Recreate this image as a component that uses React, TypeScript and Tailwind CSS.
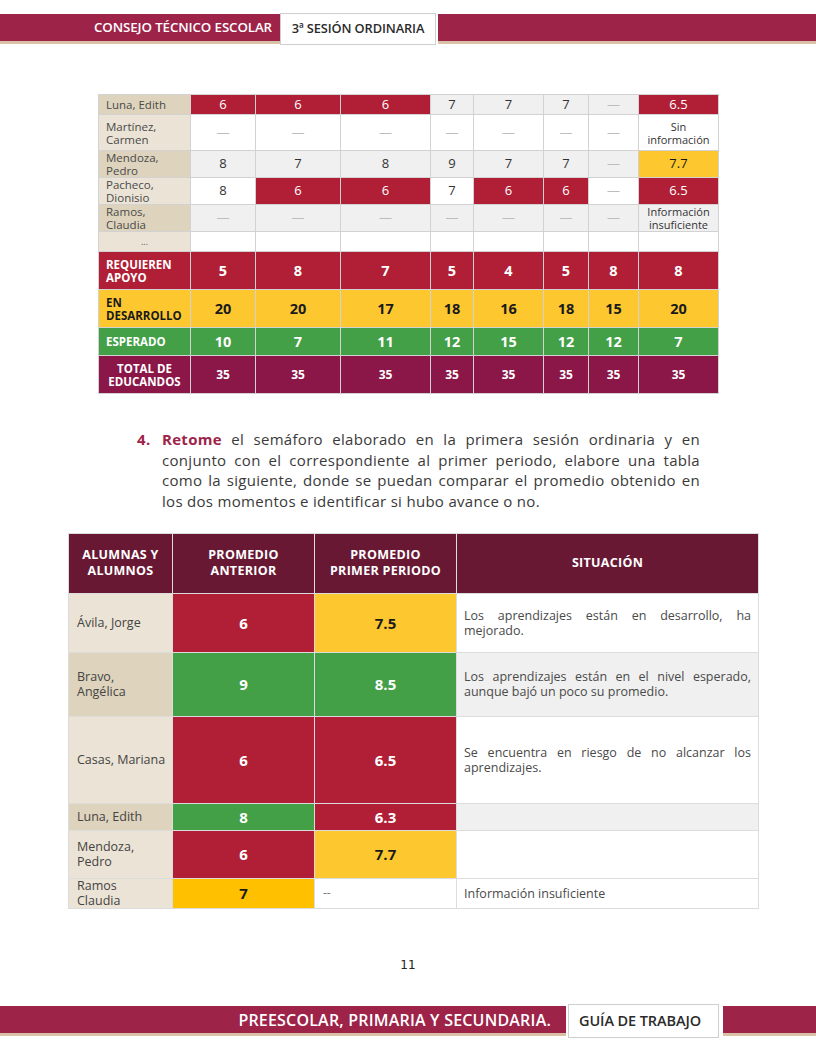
import React from 'react';

type Cell = { v: string; bg?: string; tone?: string };

const RED = 'bg-[#b01f36] text-white';
const YEL = 'bg-[#fdc82f] text-[#1a1a1a]';
const ORG = 'bg-[#ffc000] text-[#1a1a1a]';
const GRN = 'bg-[#43a047] text-white';
const TOT = 'bg-[#8a1748] text-white';
const TAN_DARK = 'bg-[#ded3bd]';
const TAN_LIGHT = 'bg-[#ebe3d5]';

const dash = '—';

const topCols = 'grid-cols-[91px_64px_84px_89px_42px_69px_44px_49px_79px]';

const studentRows: { name: string; h: string; tan: string; base: string; cells: Cell[] }[] = [
  {
    name: 'Luna, Edith', h: 'h-[19px]', tan: TAN_DARK, base: 'bg-[#f0f0f0]',
    cells: [
      { v: '6', bg: RED }, { v: '6', bg: RED }, { v: '6', bg: RED },
      { v: '7' }, { v: '7' }, { v: '7' }, { v: dash }, { v: '6.5', bg: RED },
    ],
  },
  {
    name: 'Martínez, Carmen', h: 'h-[35px]', tan: TAN_LIGHT, base: 'bg-white',
    cells: [
      { v: dash }, { v: dash }, { v: dash }, { v: dash }, { v: dash }, { v: dash }, { v: dash },
      { v: 'Sin información', tone: 'small' },
    ],
  },
  {
    name: 'Mendoza, Pedro', h: 'h-[26px]', tan: TAN_DARK, base: 'bg-[#f0f0f0]',
    cells: [
      { v: '8' }, { v: '7' }, { v: '8' }, { v: '9' }, { v: '7' }, { v: '7' }, { v: dash },
      { v: '7.7', bg: YEL },
    ],
  },
  {
    name: 'Pacheco, Dionisio', h: 'h-[26px]', tan: TAN_LIGHT, base: 'bg-white',
    cells: [
      { v: '8' }, { v: '6', bg: RED }, { v: '6', bg: RED }, { v: '7' },
      { v: '6', bg: RED }, { v: '6', bg: RED }, { v: dash }, { v: '6.5', bg: RED },
    ],
  },
  {
    name: 'Ramos, Claudia', h: 'h-[26px]', tan: TAN_DARK, base: 'bg-[#f0f0f0]',
    cells: [
      { v: dash }, { v: dash }, { v: dash }, { v: dash }, { v: dash }, { v: dash }, { v: dash },
      { v: 'Información insuficiente', tone: 'small' },
    ],
  },
];

const summaryRows = [
  { label: 'REQUIEREN APOYO', h: 'h-[37px]', cls: RED, vals: ['5', '8', '7', '5', '4', '5', '8', '8'], size: 'text-[14.5px]' },
  { label: 'EN DESARROLLO', h: 'h-[37px]', cls: YEL, vals: ['20', '20', '17', '18', '16', '18', '15', '20'], size: 'text-[14.5px]' },
  { label: 'ESPERADO', h: 'h-[27px]', cls: GRN, vals: ['10', '7', '11', '12', '15', '12', '12', '7'], size: 'text-[14.5px]' },
  { label: 'TOTAL DE EDUCANDOS', h: 'h-[37px]', cls: TOT, vals: ['35', '35', '35', '35', '35', '35', '35', '35'], size: 'text-[12px]' },
];

// names keep the line breaks of the printed table
const compareRows: {
  name: string; h: string; tan: string; a: Cell; b: Cell; note: string; noteBg: string;
}[] = [
  {
    name: 'Ávila, Jorge', h: 'h-[58px]', tan: TAN_LIGHT,
    a: { v: '6', bg: RED }, b: { v: '7.5', bg: YEL },
    note: 'Los aprendizajes están en desarrollo, ha mejorado.', noteBg: 'bg-white',
  },
  {
    name: 'Bravo,\nAngélica', h: 'h-[63px]', tan: TAN_DARK,
    a: { v: '9', bg: GRN }, b: { v: '8.5', bg: GRN },
    note: 'Los aprendizajes están en el nivel esperado, aunque bajó un poco su promedio.', noteBg: 'bg-[#f0f0f0]',
  },
  {
    name: 'Casas, Mariana', h: 'h-[86px]', tan: TAN_LIGHT,
    a: { v: '6', bg: RED }, b: { v: '6.5', bg: RED },
    note: 'Se encuentra en riesgo de no alcanzar los aprendizajes.', noteBg: 'bg-white',
  },
  {
    name: 'Luna, Edith', h: 'h-[26px]', tan: TAN_DARK,
    a: { v: '8', bg: GRN }, b: { v: '6.3', bg: RED },
    note: '', noteBg: 'bg-[#f0f0f0]',
  },
  {
    name: 'Mendoza,\nPedro', h: 'h-[47px]', tan: TAN_LIGHT,
    a: { v: '6', bg: RED }, b: { v: '7.7', bg: YEL },
    note: '', noteBg: 'bg-white',
  },
  {
    name: 'Ramos\nClaudia', h: 'h-[29px]', tan: TAN_LIGHT,
    a: { v: '7', bg: ORG }, b: { v: '--' },
    note: 'Información insuficiente', noteBg: 'bg-white',
  },
];

const TopTable = () => (
  <div className={`grid ${topCols} gap-px bg-[#d2d2d2] border border-[#d2d2d2] w-fit`}>
    {studentRows.map((row) => (
      <React.Fragment key={row.name}>
        <div className={`${row.h} ${row.tan} flex items-center pl-[7px] pr-[10px] text-[11.5px] leading-[13px] text-[#4a4a4a]`}>
          {row.name}
        </div>
        {row.cells.map((c, i) => (
          <div
            key={i}
            className={`${row.h} flex items-center justify-center text-center ${
              c.bg ? c.bg : `${row.base} ${c.v === dash ? 'text-[#bdbdbd]' : 'text-[#333]'}`
            } ${c.tone === 'small' ? 'text-[11px] leading-[13px] text-[#333]' : 'text-[13px]'}`}
          >
            {c.v}
          </div>
        ))}
      </React.Fragment>
    ))}

    {/* filler row */}
    <div className={`h-[19px] ${TAN_LIGHT} flex items-center justify-center text-[9px] text-[#555]`}>...</div>
    {Array.from({ length: 8 }).map((_, i) => (
      <div key={i} className="h-[19px] bg-white" />
    ))}

    {summaryRows.map((row) => (
      <React.Fragment key={row.label}>
        <div
          className={`${row.h} ${row.cls} flex items-center font-bold text-[11.5px] leading-[13px] ${
            row.label.startsWith('TOTAL') ? 'justify-center text-center px-1' : 'pl-[7px] pr-1'
          }`}
        >
          {row.label}
        </div>
        {row.vals.map((v, i) => (
          <div key={i} className={`${row.h} ${row.cls} ${row.size} font-bold flex items-center justify-center`}>
            {v}
          </div>
        ))}
      </React.Fragment>
    ))}
  </div>
);

const CompareTable = () => (
  <div className="grid grid-cols-[103px_141px_141px_301px] gap-px bg-[#dcdcdc] border border-[#dcdcdc] w-fit">
    {['ALUMNAS Y ALUMNOS', 'PROMEDIO ANTERIOR', 'PROMEDIO PRIMER PERIODO', 'SITUACIÓN'].map((h, i) => (
      <div
        key={h}
        className={`h-[59px] bg-[#691834] text-white font-bold text-[12.5px] tracking-[0.3px] leading-[16px] flex items-center justify-center text-center ${
          i === 0 ? 'px-2' : i === 1 ? 'px-7' : 'px-[14px]'
        }`}
      >
        {h}
      </div>
    ))}
    {compareRows.map((r) => (
      <React.Fragment key={r.name}>
        <div className={`${r.h} ${r.tan} flex items-center pl-[8px] pr-[2px] text-[12.5px] leading-[15px] text-[#444] whitespace-pre-line`}>
          {r.name}
        </div>
        {[r.a, r.b].map((c, i) =>
          c.bg ? (
            <div key={i} className={`${r.h} ${c.bg} flex items-center justify-center font-bold text-[15px]`}>
              {c.v}
            </div>
          ) : (
            <div key={i} className={`${r.h} bg-white flex items-center pl-[8px] text-[12px] text-[#777]`}>
              {c.v}
            </div>
          )
        )}
        <div className={`${r.h} ${r.noteBg} flex items-center px-[7px]`}>
          <p className="text-[12.5px] leading-[15px] text-[#4a4a4a] text-justify w-full">{r.note}</p>
        </div>
      </React.Fragment>
    ))}
  </div>
);

export default function App() {
  return (
    <div className="w-[816px] h-[1056px] bg-white flex flex-col font-['Open_Sans',sans-serif] overflow-hidden">
      {/* Header */}
      <div className="mt-[13px] h-[32px] flex items-center">
        <div className="w-[280px] h-[30px] flex flex-col">
          <div className="flex-1 bg-[#9e2349] flex items-center justify-end pr-[8px]">
            <span className="text-white font-semibold text-[13.3px] tracking-[-0.1px]">CONSEJO TÉCNICO ESCOLAR</span>
          </div>
          <div className="h-[3px] bg-[#d8c1a4]" />
        </div>
        <div className="w-[156px] h-[32px] bg-white border border-[#cfcfcf] flex items-center justify-center">
          <span className="text-[#2b2b2b] font-semibold text-[12.8px] tracking-[-0.1px]">3ª SESIÓN ORDINARIA</span>
        </div>
        <div className="flex-1 ml-[2px] h-[30px] flex flex-col">
          <div className="flex-1 bg-[#9e2349]" />
          <div className="h-[3px] bg-[#d8c1a4]" />
        </div>
      </div>

      <div className="ml-[98px] mt-[49px]">
        <TopTable />
      </div>

      {/* Instruction */}
      <div className="mt-[35px] ml-[137px] w-[563px] flex">
        <p className="text-[15px] tracking-[0.3px] leading-[20.7px] text-[#3a3a3a] text-justify pl-[25px] -indent-[25px]">
          <span className="inline-block w-[25px] indent-0 font-bold text-[#9e2349]">4.</span>
          <span className="font-bold text-[#9e2349]">Retome</span> el semáforo elaborado en la primera sesión ordinaria y en
          conjunto con el correspondiente al primer periodo, elabore una tabla como la siguiente, donde se puedan comparar el
          promedio obtenido en los dos momentos e identificar si hubo avance o no.
        </p>
      </div>

      <div className="ml-[68px] mt-[21px]">
        <CompareTable />
      </div>

      <div className="flex-1" />

      <div className="text-center text-[12px] text-[#222] font-['DejaVu_Sans',sans-serif] mb-[30px]">11</div>

      {/* Footer */}
      <div className="h-[34px] mb-[18px] flex items-center">
        <div className="w-[566px] h-[30px] flex flex-col">
          <div className="flex-1 bg-[#9e2349] flex items-center justify-end pr-[15px]">
            <span className="text-white font-semibold text-[16px] tracking-[0.2px]">PREESCOLAR, PRIMARIA Y SECUNDARIA.</span>
          </div>
          <div className="h-[3px] bg-[#d8c1a4]" />
        </div>
        <div className="ml-[2px] w-[151px] h-[34px] bg-white border border-[#cfcfcf] flex items-center pl-[10px]">
          <span className="text-[#2b2b2b] font-semibold text-[14.5px] tracking-[-0.1px]">GUÍA DE TRABAJO</span>
        </div>
        <div className="flex-1 ml-[4px] h-[30px] flex flex-col">
          <div className="flex-1 bg-[#9e2349]" />
          <div className="h-[3px] bg-[#d8c1a4]" />
        </div>
      </div>
    </div>
  );
}
